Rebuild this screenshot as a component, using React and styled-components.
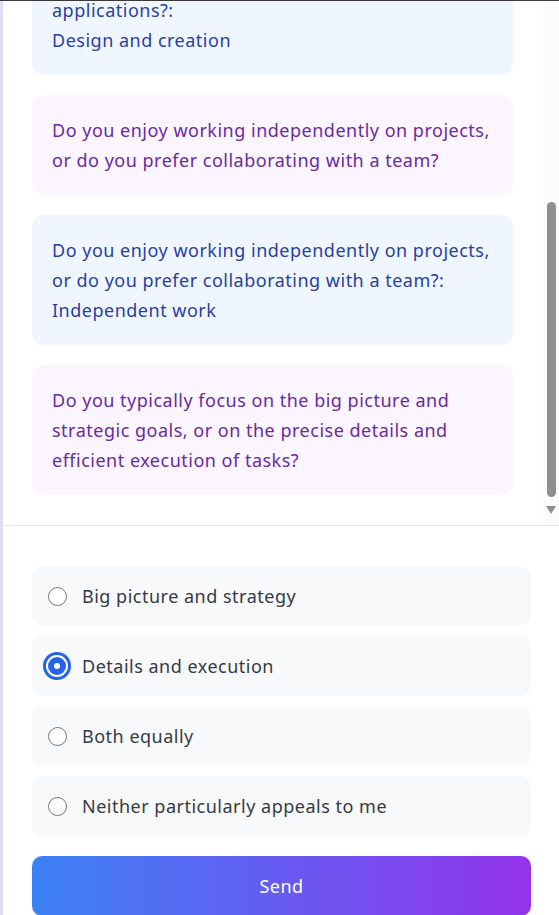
import React, { useState } from 'react'
import styled, { createGlobalStyle } from 'styled-components'

const GlobalStyle = createGlobalStyle`
  html, body {
    margin: 0;
    padding: 0;
    height: 100%;
    background: #ffffff;
  }
  body {
    font-family: "Noto Sans", "Open Sans", sans-serif;
    border-top: 1px solid #3a3a3a;
    box-sizing: border-box;
    overflow: hidden;
  }
  #root {
    height: 100%;
  }
`

const messages = [
  {
    role: 'answer',
    text: 'What part of working with technology excites you the most when you think about building new applications?: Design and creation',
  },
  {
    role: 'question',
    text: 'Do you enjoy working independently on projects, or do you prefer collaborating with a team?',
  },
  {
    role: 'answer',
    text: 'Do you enjoy working independently on projects, or do you prefer collaborating with a team?: Independent work',
  },
  {
    role: 'question',
    text: 'Do you typically focus on the big picture and strategic goals, or on the precise details and efficient execution of tasks?',
  },
]

const options = [
  'Big picture and strategy',
  'Details and execution',
  'Both equally',
  'Neither particularly appeals to me',
]

const App = () => {
  const [selected, setSelected] = useState(1)
  return (
    <React.Fragment>
      <GlobalStyle />
      <Page>
        <ChatArea>
          <MessageList>
            {messages.map((m, index) => (
              <Bubble key={`msg-${index}`} role={m.role}>
                {m.role === 'answer' && m.text.includes('?:') ? (
                  <React.Fragment>
                    {m.text.split('?: ')[0]}?:
                    <br />
                    {m.text.split('?: ')[1]}
                  </React.Fragment>
                ) : (
                  m.text
                )}
              </Bubble>
            ))}
          </MessageList>
          <ScrollTrack>
            <ScrollThumb />
            <ScrollArrow />
          </ScrollTrack>
        </ChatArea>
        <Footer>
          <OptionList>
            {options.map((opt, index) => (
              <Option key={`opt-${index}`} onClick={() => setSelected(index)}>
                <Radio checked={selected === index} />
                <OptionLabel>{opt}</OptionLabel>
              </Option>
            ))}
          </OptionList>
          <SendButton>Send</SendButton>
        </Footer>
      </Page>
    </React.Fragment>
  )
}

const Page = styled.div`
  display: flex;
  flex-direction: column;
  height: 100%;
  border-left: 3px solid #dde0f3;
  box-sizing: border-box;
`

const ChatArea = styled.div`
  display: flex;
  height: 524px;
  flex-shrink: 0;
  border-bottom: 1px solid #e5e7eb;
`

const MessageList = styled.div`
  flex: 1;
  display: flex;
  flex-direction: column;
  justify-content: flex-end;
  gap: 20px;
  overflow: hidden;
  padding: 0 30px 30px 29px;
`

const Bubble = styled.div`
  flex-shrink: 0;
  padding: 20px;
  border-radius: 12px;
  font-size: 18px;
  line-height: 30px;
  letter-spacing: 0.5px;
  background-color: ${(p) => (p.role === 'answer' ? '#eff6ff' : '#faf5ff')};
  color: ${(p) => (p.role === 'answer' ? '#2a3f9d' : '#6b2a9e')};
`

const ScrollTrack = styled.div`
  position: relative;
  width: 16px;
  flex-shrink: 0;
  background-color: #fbfbfb;
`

const ScrollThumb = styled.div`
  position: absolute;
  left: 4px;
  top: 201px;
  width: 9px;
  height: 295px;
  border-radius: 5px;
  background-color: #8f8f8f;
`

const ScrollArrow = styled.div`
  position: absolute;
  left: 3px;
  top: 505px;
  width: 0;
  height: 0;
  border-left: 5px solid transparent;
  border-right: 5px solid transparent;
  border-top: 8px solid #8f8f8f;
`

const Footer = styled.div`
  display: flex;
  flex-direction: column;
  gap: 20px;
  padding: 40px 28px 0 29px;
`

const OptionList = styled.div`
  display: flex;
  flex-direction: column;
  gap: 10px;
`

const Option = styled.label`
  display: flex;
  align-items: center;
  height: 60px;
  padding: 0 16px;
  border-radius: 10px;
  background-color: #f8f9fb;
  cursor: pointer;
  box-sizing: border-box;
`

const Radio = styled.span`
  position: relative;
  flex-shrink: 0;
  width: ${(p) => (p.checked ? '18px' : '19px')};
  height: ${(p) => (p.checked ? '18px' : '19px')};
  margin-right: ${(p) => (p.checked ? '16px' : '15px')};
  border-radius: 50%;
  box-sizing: border-box;
  border: ${(p) => (p.checked ? 'none' : '1px solid #767676')};
  background-color: ${(p) => (p.checked ? '#2563eb' : '#ffffff')};
  box-shadow: ${(p) =>
    p.checked ? '0 0 0 2px #ffffff, 0 0 0 5px #2563eb' : 'none'};
  &::after {
    content: '';
    display: ${(p) => (p.checked ? 'block' : 'none')};
    position: absolute;
    left: 6px;
    top: 6px;
    width: 6px;
    height: 6px;
    border-radius: 50%;
    background-color: #ffffff;
  }
`

const OptionLabel = styled.span`
  font-size: 18px;
  letter-spacing: 0.5px;
  color: #363a45;
`

const SendButton = styled.button`
  height: 60px;
  border: none;
  border-radius: 10px;
  background: linear-gradient(90deg, #3b82f6 0%, #9333ea 100%);
  color: #ffffff;
  font-family: "Noto Sans", "Open Sans", sans-serif;
  font-size: 18px;
  letter-spacing: 0.5px;
  cursor: pointer;
`

export default App
